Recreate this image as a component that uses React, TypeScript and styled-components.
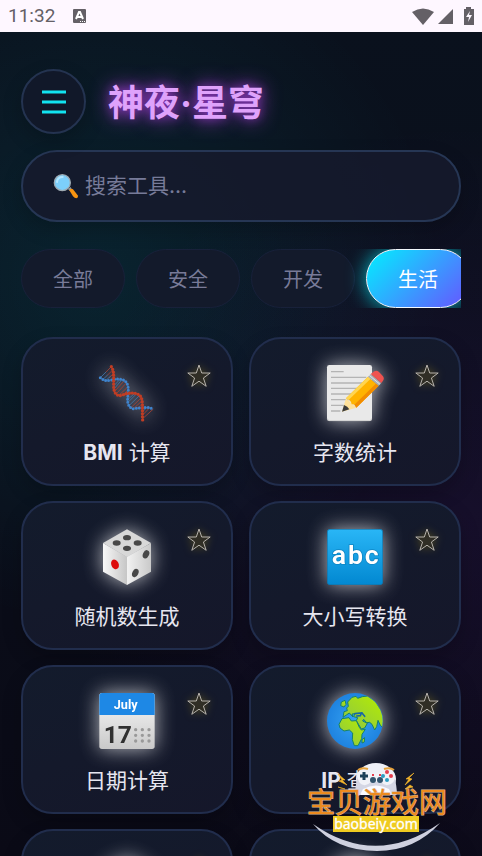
import React, { useState } from "react";
import styled, { createGlobalStyle, css } from "styled-components";

const sans = `Inter, Roboto, "Noto Sans CJK SC", sans-serif`;

const GlobalStyle = createGlobalStyle`
  *, *::before, *::after { box-sizing: border-box; }
  body { margin: 0; background: #0a0a14; }
  button, input { font-family: inherit; margin: 0; }
`;

const Shell = styled.div`
  height: 100vh;
  display: flex;
  flex-direction: column;
  overflow: hidden;
  position: relative;
  font-family: ${sans};
  color: #e6e6f0;
`;

const StatusBar = styled.header`
  flex: none;
  height: 32px;
  padding: 0 3px 0 8px;
  display: flex;
  align-items: center;
  background: #fef7ff;
  color: #646066;
  font: 400 19px/32px Roboto, sans-serif;
`;

const StatusIcons = styled.div`
  margin-left: auto;
  display: flex;
  align-items: center;
  gap: 4px;
  svg { display: block; }
`;

const Notice = styled.svg`
  margin-left: 18px;
`;

const Page = styled.main`
  flex: 1;
  min-height: 0;
  overflow: hidden;
  padding: 37px 21px 0;
  background:
    radial-gradient(circle at 20% 30%, rgba(0, 242, 255, 0.09), transparent 50%),
    radial-gradient(circle at 96% 60%, rgba(168, 40, 254, 0.08), transparent 60%),
    linear-gradient(#0a111d, #0a0a16);
`;

const TitleRow = styled.div`
  display: flex;
  align-items: center;
  gap: 22px;
`;

const MenuButton = styled.button`
  width: 65px;
  height: 65px;
  padding: 0;
  display: grid;
  place-items: center;
  border-radius: 50%;
  border: 2px solid #243350;
  background: #111829;
  color: #12e3f0;
  box-shadow: 0 8px 20px rgba(0, 0, 0, 0.2);
`;

const Title = styled.h1`
  margin: 0;
  padding-top: 2px;
  font-size: 36px;
  line-height: 48px;
  font-weight: 700;
  color: #dfa2fb;
  text-shadow: 0 0 20px rgba(200, 70, 255, 0.8), 0 0 10px rgba(200, 70, 255, 0.4);
`;

const SearchBox = styled.label`
  margin-top: 16px;
  height: 72px;
  padding: 0 30px;
  display: flex;
  align-items: center;
  gap: 6px;
  border: 2px solid #263654;
  border-radius: 36px;
  background: rgba(22, 26, 45, 0.85);
  box-shadow: 0 8px 20px rgba(0, 0, 0, 0.2);
`;

const SearchInput = styled.input`
  flex: 1;
  min-width: 0;
  padding: 0;
  border: 0;
  outline: 0;
  background: none;
  color: #e6e6f0;
  font-size: 21px;
  line-height: 32px;
  &::placeholder { color: #777b99; opacity: 1; }
`;

const ChipRow = styled.nav`
  margin-top: 27px;
  display: flex;
  gap: 11px;
  overflow: hidden;
`;

const Chip = styled.button<{ $active: boolean }>`
  flex: none;
  width: 104px;
  height: 59px;
  padding: 0;
  border: 1px solid #18213a;
  border-radius: 30px;
  background: #131a2b;
  color: #787a98;
  font-size: 20px;
  ${(p) =>
    p.$active &&
    css`
      border-color: #f4faff;
      background: linear-gradient(135deg, #00f2ff, #6a50ff) border-box;
      color: #fff;
      box-shadow: 0 0 20px rgba(0, 242, 255, 0.75);
    `}
`;

const Grid = styled.section`
  margin-top: 29px;
  display: grid;
  grid-template-columns: repeat(2, minmax(0, 1fr));
  gap: 15px 16px;
`;

const Card = styled.article`
  position: relative;
  height: 149px;
  padding-top: 26px;
  display: flex;
  flex-direction: column;
  align-items: center;
  gap: 16px;
  border: 2px solid #212d4c;
  border-radius: 32px;
  background: linear-gradient(160deg, #131b2c, #15172a);
  box-shadow: 0 8px 20px rgba(0, 0, 0, 0.2);
`;

const Artwork = styled.svg`
  flex: none;
  width: 56px;
  height: 56px;
  overflow: visible;
  filter: drop-shadow(0 0 10px rgba(255, 255, 255, 0.7));
`;

const CardLabel = styled.h2`
  margin: 0;
  font-size: 21px;
  line-height: 32px;
  font-weight: 400;
  color: #e6e6f0;
  strong { font-weight: 700; }
`;

const StarButton = styled.button`
  position: absolute;
  top: 24px;
  right: 19px;
  padding: 0;
  border: 0;
  background: none;
  svg {
    display: block;
    filter: drop-shadow(0 0 4px rgba(255, 210, 0, 0.25));
  }
`;

const Badge = styled.svg`
  position: absolute;
  right: 33px;
  bottom: 2px;
  pointer-events: none;
`;

const pips = [[84, 26], [53, 42], [116, 42], [84, 58]];

function Dna() {
  return (
    <Artwork viewBox="0 0 168 168" fill="none" strokeLinecap="round">
      <g stroke="#a84335" strokeWidth="2.5">
        <path d="M20 22 37 5M25 31 42 14M31 38 43 26M48 78 75 48M52 86 82 54M60 91 87 65M70 91 88 75M96 128 127 98M103 131 129 108M112 131 130 119M131 150 152 128M132 160 162 133" />
      </g>
      <g stroke="#4277aa" strokeWidth="2.5">
        <path d="M4 38 20 22M11 44 25 31M20 47 34 34M45 62 62 44M46 71 68 45M87 103 106 86M88 111 113 86M91 121 121 92M131 140 144 127" />
      </g>
      <path stroke="#3f83cc" strokeWidth="9" strokeDasharray="0 9" d="M4 38Q18 51 37 45T70 44C93 52 88 78 86 100C84 118 93 136 112 130T145 127L165 132" />
      <path stroke="#bf3d24" strokeWidth="10" strokeDasharray="0 9" d="M37 5C47 20 43 40 44 62C44 84 53 96 70 90S105 81 119 89C136 98 128 135 131 165" />
    </Artwork>
  );
}

function Memo() {
  return (
    <Artwork viewBox="0 0 168 168">
      <rect width="135" height="168" rx="7" fill="#e9e9e9" />
      <path d="M1 160q0 7 7 7h119q7 0 7-7" fill="none" stroke="#c4c4c4" strokeWidth="2" />
      <path d="M12 20h38M12 37h106M12 54h106M12 70h98M12 87h92M12 104h92M12 121h38M12 138h28" stroke="#b4b4b4" strokeWidth="4" />
      <path d="M45 140 57 100 88 128Z" fill="#ffe19a" />
      <path d="M45 140 51 120Q62 124 67 133Z" fill="#3c3c3c" />
      <path d="M57 100 123 35 155 62 88 128Q84 116 74 118Q72 105 57 100Z" fill="#ffb300" />
      <path d="M57 100 123 35 131 41 64 106Z" fill="#ffd54f" />
      <path d="M82 119 148 55 155 62 88 128Z" fill="#f28c00" />
      <path d="M123 35 131 27 163 54 155 62Z" fill="#aab0b5" />
      <path d="M127 31 159 58" stroke="#dee2e5" strokeWidth="3" />
      <path d="M131 27 142 19Q149 14 156 21L168 34Q173 41 168 47L163 54Z" fill="#ef5350" />
    </Artwork>
  );
}

function Dice() {
  return (
    <Artwork viewBox="0 0 168 168">
      <defs>
        <linearGradient id="diceLeft"><stop stopColor="#f8f8f8" /><stop offset="1" stopColor="#c6c6c6" /></linearGradient>
        <linearGradient id="diceRight"><stop stopColor="#f2f2f2" /><stop offset="1" stopColor="#c9c9c9" /></linearGradient>
      </defs>
      <path d="M84 1 156 42 84 84 12 42Z" fill="#d8d8d8" />
      <path d="M12 42 84 84V168L12 128Z" fill="url(#diceLeft)" />
      <path d="M156 42 84 84V168L156 128Z" fill="url(#diceRight)" />
      {pips.map(([x, y]) => <ellipse key={x + "-" + y} cx={x} cy={y} rx="12" ry="8" fill="#484848" />)}
      <ellipse cx="48" cy="106" rx="11" ry="15" fill="#dd0b0b" transform="rotate(-25 48 106)" />
      <ellipse cx="141" cy="76" rx="9" ry="13" fill="#484848" transform="rotate(25 141 76)" />
      <ellipse cx="109" cy="132" rx="9" ry="13" fill="#484848" transform="rotate(25 109 132)" />
    </Artwork>
  );
}

function Letters() {
  return (
    <Artwork viewBox="0 0 168 168">
      <defs>
        <linearGradient id="abcFill" x2="0" y2="1"><stop stopColor="#29b6f6" /><stop offset="1" stopColor="#0288d1" /></linearGradient>
      </defs>
      <rect x="1" y="1" width="166" height="166" rx="8" fill="url(#abcFill)" stroke="#087bb8" strokeWidth="2" />
      <text x="14 63 113" y="106" fontFamily="Roboto, sans-serif" fontWeight="600" fontSize="80" fill="#fff" stroke="#0f86c4" strokeWidth="5" paintOrder="stroke">abc</text>
    </Artwork>
  );
}

function Calendar() {
  return (
    <Artwork viewBox="0 0 168 168">
      <defs>
        <linearGradient id="calFill" x2="0" y2="1"><stop stopColor="#fafafa" /><stop offset="1" stopColor="#c9c9c9" /></linearGradient>
      </defs>
      <rect x="1" width="166" height="168" rx="8" fill="url(#calFill)" />
      <path d="M1 66V8Q1 0 9 0H159Q167 0 167 8V66Z" fill="#1e88e5" />
      <g fontFamily="Roboto, sans-serif" fontWeight="700">
        <text x="80" y="47" fontSize="38" fill="#fff" textAnchor="middle">July</text>
        <text x="14" y="149" fontSize="74" fill="#303030">17</text>
      </g>
      <path d="M110 110h45M110 127h45M110 144h45" stroke="#999" strokeWidth="10" strokeDasharray="0 20" strokeLinecap="round" />
    </Artwork>
  );
}

function Globe() {
  return (
    <Artwork viewBox="0 0 168 168">
      <defs>
        <clipPath id="globeClip"><circle cx="84" cy="84" r="83" /></clipPath>
        <radialGradient id="sea"><stop stopColor="#35a2f3" /><stop offset="1" stopColor="#1e83e0" /></radialGradient>
        <linearGradient id="land" x1="1" y1="0" x2="0" y2="1"><stop stopColor="#b6ed00" /><stop offset="1" stopColor="#8bc34a" /></linearGradient>
      </defs>
      <circle cx="84" cy="84" r="84" fill="url(#sea)" />
      <g clipPath="url(#globeClip)" fill="url(#land)" stroke="#17806b" strokeWidth="3" strokeLinejoin="round">
        <path d="M64 40 62 27 75 13 87 10 92 16 106 11 122 9 145 25 170 64V106L160 97 153 82 149 101 143 111 135 94 128 88 119 89 110 79 107 84 121 91 113 105 103 108 88 83 92 74 80 71 84 62 75 63 78 72 67 60 58 66 48 73 51 56 61 53 59 45Z" />
        <path d="M43 27 54 22 57 34 51 42 41 38Z" />
        <path d="M45 77 66 74 73 84 88 83 97 103 103 111 115 109 105 124 104 137 93 158 82 158 76 140 77 120 67 111 51 114 39 105 36 94Z" />
        <path d="M105 140 113 134 112 147 105 150Z" />
      </g>
      <path d="M84 62 103 60 100 68 89 69M105 60 113 70" fill="none" stroke="#1766a5" strokeWidth="5" strokeLinecap="round" />
    </Artwork>
  );
}

function Magnifier() {
  return (
    <svg width="26" height="26" viewBox="0 0 78 78" aria-hidden="true">
      <path d="M45 48 53 42 57 50 50 54Z" fill="#8e9ba3" />
      <path d="M49 52Q54 45 60 49L74 67Q77 74 70 76Q65 76 60 70Z" fill="#f79411" />
      <circle cx="28" cy="29" r="24" fill="#7ccffb" stroke="#9eaab2" strokeWidth="4" />
      <path d="M12 27Q14 12 29 12" fill="none" stroke="#b4e6ff" strokeWidth="6" strokeLinecap="round" />
    </svg>
  );
}

const tools: { id: string; art: () => React.JSX.Element; latin?: string; label?: string }[] = [
  { id: "bmi", art: Dna, latin: "BMI", label: "计算" },
  { id: "count", art: Memo, label: "字数统计" },
  { id: "random", art: Dice, label: "随机数生成" },
  { id: "case", art: Letters, label: "大小写转换" },
  { id: "date", art: Calendar, label: "日期计算" },
  { id: "ip", art: Globe, latin: "IP", label: "查询" },
  { id: "extra-left", art: Dice },
  { id: "extra-right", art: Globe },
];

function SiteBadge() {
  return (
    <Badge width="144" height="92" viewBox="0 0 144 92">
      <path d="M8 62Q71 106 135 61Q110 89 72 89Q31 89 8 62Z" fill="#cfd1df" />
      <ellipse cx="71" cy="17" rx="20" ry="16" fill="#eef0f7" />
      <path d="M56 11Q71 15 86 11Q91 14 92 32Q89 37 82 28Q71 22 60 28Q53 37 50 32Q51 14 56 11Z" fill="#d4d6e4" />
      <path d="M54 10Q58 7 63 11H79Q85 7 89 11Q92 18 86 22Q80 25 76 20H66Q61 25 56 22Q51 18 54 10Z" fill="#f1f2f8" />
      <path d="M58 27Q71 20 84 27L87 33H55Z" fill="#fafaff" />
      <path d="M53 8Q57 5 63 7M79 7Q85 5 89 8" fill="none" stroke="#e7a23b" strokeWidth="2" />
      <path d="M59 10v8M55 14h8" stroke="#1c4058" strokeWidth="3" />
      <circle cx="68" cy="18" r="3" fill="#31536d" />
      <circle cx="75" cy="18" r="3" fill="#31536d" />
      <circle cx="82" cy="10" r="2" fill="#e53e4e" />
      <circle cx="86" cy="14" r="2" fill="#e53e4e" />
      <circle cx="82" cy="18" r="2" fill="#2a9bc1" />
      <circle cx="78" cy="14" r="2" fill="#2a9bc1" />
      <path d="M67 13h2M74 13h2" stroke="#e53e4e" strokeWidth="2" />
      <path d="M33 12 40 18 37 18 42 23 34 19 37 18ZM109 11 101 17 104 17 100 23 107 17 104 16ZM33 25 40 27 36 26ZM108 25 100 27 105 23Z" fill="#f6b72b" stroke="#f6b72b" strokeWidth="0.6" />
      <rect x="28" y="54" width="86" height="16" fill="#efcb20" />
      <text x="71" y="67" textAnchor="middle" fontFamily="Noto Sans, sans-serif" fontSize="14" fill="#fff" stroke="#fff" strokeWidth="0.3">baobeiy.com</text>
      <text x="2" y="51" fontFamily="Noto Sans CJK SC, sans-serif" fontWeight="400" fontSize="28" fill="#ed8b20" stroke="#d9b391" strokeWidth="1" paintOrder="stroke">宝贝游戏网</text>
    </Badge>
  );
}

export default function App() {
  const [category, setCategory] = useState("生活");
  return (
    <Shell>
      <GlobalStyle />
      <StatusBar>
        <span>11:32</span>
        <Notice width="13" height="14" viewBox="0 0 13 14">
          <rect width="13" height="14" rx="1" fill="#646066" />
          <path d="M3 10 6 3h1l3 7M4 8h5" fill="none" stroke="#fff" strokeWidth="2" />
          <path d="M7 12.5h5" stroke="#fff" strokeDasharray="1 1" />
        </Notice>
        <StatusIcons>
          <svg width="22" height="17" viewBox="0 0 22 17"><path d="M0 4Q11-3 22 4L11 17Z" fill="#646066" /></svg>
          <svg width="15" height="15" viewBox="0 0 15 15"><path d="M15 0V15H0Z" fill="#646066" /></svg>
          <svg width="22" height="18" viewBox="0 0 22 18">
            <path d="M9 0h5v2h3v16H7V2h2Z" fill="#646066" />
            <path d="M13 4 9 10h3l-1 5 4-7h-3Z" fill="#fef7ff" />
          </svg>
        </StatusIcons>
      </StatusBar>
      <Page>
        <TitleRow>
          <MenuButton aria-label="菜单">
            <svg width="24" height="24" viewBox="0 0 24 24" stroke="currentColor" strokeWidth="3"><path d="M0 2h24M0 12h24M0 22h24" /></svg>
          </MenuButton>
          <Title>神夜·星穹</Title>
        </TitleRow>
        <SearchBox>
          <Magnifier />
          <SearchInput type="text" placeholder="搜索工具..." aria-label="搜索工具" />
        </SearchBox>
        <ChipRow>
          {["全部", "安全", "开发", "生活"].map((name) => (
            <Chip key={name} $active={name === category} onClick={() => setCategory(name)}>{name}</Chip>
          ))}
        </ChipRow>
        <Grid>
          {tools.map(({ id, art: Art, latin, label }) => (
            <Card key={id}>
              <Art />
              {label && <CardLabel>{latin && <><strong>{latin}</strong> </>}{label}</CardLabel>}
              <StarButton aria-label="收藏">
                <svg width="26" height="26" viewBox="0 0 26 26">
                  <path d="M13 2 15.7 10H24.2L17.4 15 20.2 23.3 13 18.2 5.8 23.3 8.6 15 1.8 10H10.3Z" fill="#302e25" stroke="#b7b3ac" />
                </svg>
              </StarButton>
            </Card>
          ))}
        </Grid>
      </Page>
      <SiteBadge />
    </Shell>
  );
}
